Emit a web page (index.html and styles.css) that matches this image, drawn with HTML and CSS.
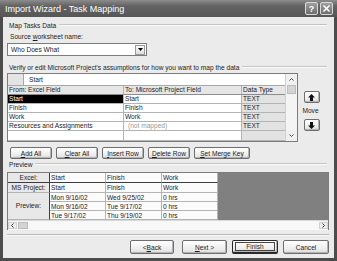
FILE: index.html
```html
<!DOCTYPE html>
<html>
  <head>
    <meta charset="UTF-8">
    <title>Import Wizard - Task Mapping</title>
    <link rel="stylesheet" href="styles.css">
  </head>
  <body>
    <div class="window">
      <div class="titlebar">
        <span class="title">Import Wizard - Task Mapping</span>
        <span class="cap-btn">?</span>
        <span class="cap-btn">
          <svg width="9" height="9" viewBox="0 0 9 9"><path d="M1.5 1.5 L7.5 7.5 M7.5 1.5 L1.5 7.5" stroke="#fff" stroke-width="1.6"/></svg>
        </span>
      </div>

      <div class="client">
        <div class="group-head"><span>Map Tasks Data</span></div>
        <div class="field-label">Source <u>w</u>orksheet name:</div>
        <div class="combo">
          <span class="combo-text">Who Does What</span>
          <span class="combo-btn"><svg width="5" height="3" viewBox="0 0 5 3"><path d="M0 0 H5 L2.5 3 Z" fill="#000"/></svg></span>
        </div>

        <div class="group-head verify"><span>Verify or edit Microsoft Project's assumptions for how you want to map the data</span></div>

        <div class="map-area">
          <div class="map-grid">
            <div class="map-body">
              <div class="edit-row">
                <span class="edit-stub"></span>
                <span class="edit-input">Start</span>
              </div>
              <div class="map-row head">
                <span class="c1">From: Excel Field</span>
                <span class="c2">To: Microsoft Project Field</span>
                <span class="c3">Data Type</span>
              </div>
              <div class="map-row">
                <span class="c1 selected">Start</span>
                <span class="c2">Start</span>
                <span class="c3">TEXT</span>
              </div>
              <div class="map-row">
                <span class="c1">Finish</span>
                <span class="c2">Finish</span>
                <span class="c3">TEXT</span>
              </div>
              <div class="map-row">
                <span class="c1">Work</span>
                <span class="c2">Work</span>
                <span class="c3">TEXT</span>
              </div>
              <div class="map-row">
                <span class="c1">Resources and Assignments</span>
                <span class="c2 muted">(not mapped)</span>
                <span class="c3">TEXT</span>
              </div>
              <div class="map-row last">
                <span class="c1"></span>
                <span class="c2"></span>
                <span class="c3"></span>
              </div>
            </div>
            <div class="vscroll">
              <span class="sb-arrow"><svg width="5" height="3" viewBox="0 0 5 3"><path d="M0.5 2.5 L2.5 0.5 L4.5 2.5" stroke="#444" fill="none"/></svg></span>
              <span class="sb-thumb"></span>
              <span class="sb-track"></span>
              <span class="sb-arrow"><svg width="5" height="3" viewBox="0 0 5 3"><path d="M0.5 0.5 L2.5 2.5 L4.5 0.5" stroke="#444" fill="none"/></svg></span>
            </div>
          </div>

          <div class="move-col">
            <span class="btn move-btn"><svg width="7" height="7" viewBox="0 0 7 7"><path d="M3.5 0 L7 3.5 H5 V7 H2 V3.5 H0 Z" fill="#111"/></svg></span>
            <span class="move-label">Move</span>
            <span class="btn move-btn"><svg width="7" height="7" viewBox="0 0 7 7"><path d="M3.5 7 L7 3.5 H5 V0 H2 V3.5 H0 Z" fill="#111"/></svg></span>
          </div>
        </div>

        <div class="tool-row">
          <span class="btn w42"><u>A</u>dd All</span>
          <span class="btn w42"><u>C</u>lear All</span>
          <span class="btn w42"><u>I</u>nsert Row</span>
          <span class="btn w42"><u>D</u>elete Row</span>
          <span class="btn w56"><u>S</u>et Merge Key</span>
        </div>

        <div class="group-head"><span>Preview</span></div>

        <div class="preview">
          <div class="pv-grid">
            <span class="pv-label r1">Excel:</span>
            <span class="pv-cell r1">Start</span>
            <span class="pv-cell r1">Finish</span>
            <span class="pv-cell r1">Work</span>
            <span class="pv-blank"></span>

            <span class="pv-label">MS Project:</span>
            <span class="pv-cell">Start</span>
            <span class="pv-cell">Finish</span>
            <span class="pv-cell">Work</span>

            <span class="pv-label tall">Preview:</span>
            <span class="pv-cell">Mon 9/16/02</span>
            <span class="pv-cell">Wed 9/25/02</span>
            <span class="pv-cell">0 hrs</span>

            <span class="pv-cell">Mon 9/16/02</span>
            <span class="pv-cell">Tue 9/17/02</span>
            <span class="pv-cell">0 hrs</span>

            <span class="pv-cell">Tue 9/17/02</span>
            <span class="pv-cell">Thu 9/19/02</span>
            <span class="pv-cell">0 hrs</span>
          </div>
          <div class="hscroll">
            <span class="sb-arrow h"><svg width="3" height="5" viewBox="0 0 3 5"><path d="M2.5 0.5 L0.5 2.5 L2.5 4.5" stroke="#333" fill="none"/></svg></span>
            <span class="sb-thumb h"></span>
            <span class="sb-track"></span>
            <span class="sb-arrow h"><svg width="3" height="5" viewBox="0 0 3 5"><path d="M0.5 0.5 L2.5 2.5 L0.5 4.5" stroke="#333" fill="none"/></svg></span>
          </div>
        </div>

        <div class="separator"></div>

        <div class="footer">
          <span class="btn back">&lt; <u>B</u>ack</span>
          <span class="btn next"><u>N</u>ext &gt;</span>
          <span class="btn finish"><span class="focus">Finish</span></span>
          <span class="btn cancel">Cancel</span>
        </div>
      </div>
    </div>
  </body>
</html>
```

FILE: styles.css
```css
*, html, body {
  margin: 0;
  padding: 0;
  box-sizing: border-box;
}

body {
  font-family: "Liberation Sans", Arial, sans-serif;
  font-size: 6.6px;
  color: #1c1c1c;
  background: #fff;
}

u { text-decoration: underline; text-underline-offset: 1px; }

.window {
  width: 337px;
  height: 261px;
  display: flex;
  flex-direction: column;
  background: #4c4c4c;
}

/* title bar */
.titlebar {
  height: 17px;
  flex: none;
  display: flex;
  align-items: center;
  padding: 0 4px 0 5px;
  background: linear-gradient(#8c8c8c, #636363 35%, #565656);
  color: #fff;
  font-size: 9px;
}

.title { flex: 1; }

.cap-btn {
  width: 13px;
  height: 13px;
  margin-left: 2px;
  border: 1px solid #d8d8d8;
  border-radius: 2px;
  background: linear-gradient(#a0a0a0, #6c6c6c);
  display: flex;
  align-items: center;
  justify-content: center;
  font-weight: bold;
  font-size: 9px;
}

/* dialog body */
.client {
  flex: 1;
  margin: 0 3px 3px;
  background: #ebebeb;
  padding: 3px 5px 0 4px;
  display: flex;
  flex-direction: column;
}

.group-head {
  height: 10px;
  flex: none;
  display: flex;
  align-items: center;
  padding-left: 2px;
  margin-right: 2px;
  white-space: nowrap;
}

.group-head::after {
  content: "";
  flex: 1;
  border-top: 1px solid #c4c4c4;
  border-bottom: 1px solid #fafafa;
  margin-left: 3px;
}

.verify { margin-top: 6px; }

.field-label {
  height: 9px;
  margin-top: 2px;
  padding-left: 3px;
  line-height: 9px;
}

.combo {
  width: 140px;
  height: 13px;
  margin-top: 2px;
  border: 1px solid #7c7c7c;
  background: #fff;
  display: flex;
  align-items: center;
}

.combo-text { flex: 1; padding-left: 3px; }

.combo-btn {
  width: 10px;
  height: 10px;
  margin-right: 1px;
  border: 1px solid #9a9a9a;
  background: linear-gradient(#fafafa, #dedede);
  display: flex;
  align-items: center;
  justify-content: center;
}

/* mapping grid */
.map-area {
  height: 69px;
  margin-top: 1px;
  display: flex;
}

.map-grid {
  width: 291px;
  border: 1px solid #7c7c7c;
  background: #fff;
  display: flex;
}

.map-body { flex: 1; display: flex; flex-direction: column; }

.edit-row {
  height: 12px;
  display: flex;
  border-bottom: 1px solid #a8a8a8;
}

.edit-stub {
  width: 16px;
  background: #e4e4e4;
  border-right: 1px solid #a8a8a8;
}

.edit-input {
  flex: 1;
  padding-left: 5px;
  line-height: 11px;
  background: #fff;
}

.map-row {
  height: 9px;
  display: flex;
  line-height: 8px;
}

.map-row.last { height: 10px; }

.map-row > span {
  border-bottom: 1px solid #b4b4b4;
  border-right: 1px solid #b4b4b4;
  padding-left: 1px;
  white-space: nowrap;
  overflow: hidden;
}

.map-row .c1 { width: 116px; }
.map-row .c2 { width: 118px; }
.map-row .c3 { flex: 1; background: #e2e2e2; border-right: 0; }

.map-row.head > span { background: #e6e6e6; border-bottom-color: #8c8c8c; }

.map-row .selected { background: #000; color: #fff; }
.muted { color: #9a9a9a; padding-left: 4px !important; }

.vscroll {
  width: 12px;
  display: flex;
  flex-direction: column;
  background: #f4f4f4;
  border-left: 1px solid #d0d0d0;
}

.sb-arrow {
  height: 11px;
  display: flex;
  align-items: center;
  justify-content: center;
  background: #f0f0f0;
}

.sb-thumb {
  height: 9px;
  margin: 0 1px;
  background: #d4d4d4;
  border: 1px solid #bcbcbc;
}

.sb-track { flex: 1; }

.move-col {
  width: 17px;
  margin-left: 5px;
  display: flex;
  flex-direction: column;
  align-items: center;
  padding-top: 18px;
}

.move-btn {
  width: 16px;
  height: 13px;
}

.move-label {
  height: 16px;
  line-height: 16px;
  margin-left: -2px;
}

/* buttons */
.btn {
  height: 12px;
  display: flex;
  align-items: center;
  justify-content: center;
  border: 1px solid #6e6e6e;
  border-radius: 2px;
  background: linear-gradient(#ffffff, #ececec 70%, #d8d8d8);
  box-shadow: inset -1px -1px 0 #b4b4b4;
  white-space: nowrap;
}

.tool-row {
  margin-top: 5px;
  display: flex;
  gap: 4px;
  padding-left: 3px;
}

.w42 { width: 42px; }
.w56 { width: 56px; }

/* preview */
.preview {
  height: 58px;
  margin-top: 3px;
  border: 1px solid #7c7c7c;
  display: flex;
  flex-direction: column;
  background: #f6f6f6;
}

.pv-grid {
  display: grid;
  grid-template-columns: 42px 56px 56px 56px 1fr;
  grid-template-rows: 10px 10px 9px 9px 9px;
}

.pv-label {
  background: #e8e8e8;
  border-right: 1px solid #3c3c3c;
  border-bottom: 1px solid #b4b4b4;
  text-align: center;
  line-height: 9px;
}

.pv-label.tall {
  grid-row: span 3;
  line-height: 26px;
}

.pv-cell {
  background: #fbfbfb;
  border-right: 1px solid #b4b4b4;
  border-bottom: 1px solid #b4b4b4;
  padding-left: 1px;
  line-height: 9px;
  white-space: nowrap;
}

.pv-label.r1, .pv-cell.r1 { border-bottom: 1px solid #3c3c3c; }

.pv-blank {
  grid-column: 5;
  grid-row: 1 / span 5;
  background: #808080;
}

.hscroll {
  flex: 1;
  display: flex;
  background: #f8f8f8;
  border-top: 1px solid #d8d8d8;
  padding: 1px 0;
}

.sb-arrow.h { width: 9px; height: auto; background: #ededed; border: 1px solid #d0d0d0; }
.sb-thumb.h { width: 10px; height: auto; margin: 0 1px; }

.separator {
  margin-top: 4px;
  border-top: 1px solid #b8b8b8;
  border-bottom: 1px solid #fafafa;
}

.footer {
  margin-top: 4px;
  display: flex;
  justify-content: flex-end;
}

.footer .btn { height: 14px; }
.back { width: 44px; margin-right: 8px; }
.next { width: 45px; margin-right: 5px; }
.finish { width: 46px; margin-right: 5px; border-color: #2a2a2a; border-width: 1px 1px 2px 1px; }
.cancel { width: 46px; }

.focus {
  width: 40px;
  height: 9px;
  display: flex;
  align-items: center;
  justify-content: center;
  border: 1px solid #444;
}
```
